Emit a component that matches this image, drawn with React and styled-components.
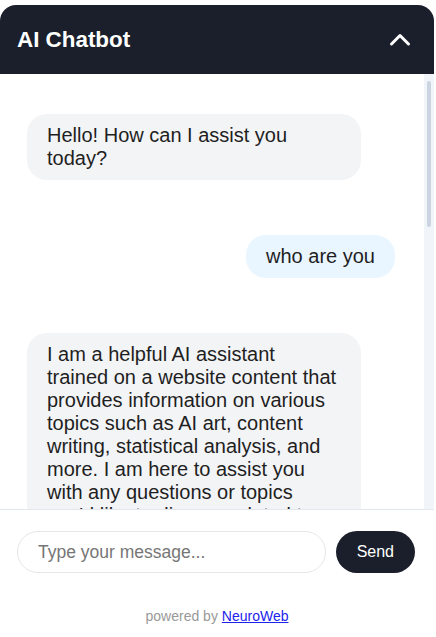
import React, { useState } from 'react'
import styled, { createGlobalStyle } from 'styled-components';

const GlobalStyle = createGlobalStyle`
  html, body {
    margin: 0;
    padding: 0;
    background: #ffffff;
    font-family: "Liberation Sans", Arial, sans-serif;
  }
  * { box-sizing: border-box; }
`;

const messages = [
  { id: 1, from: 'bot', text: 'Hello! How can I assist you today?' },
  { id: 2, from: 'user', text: 'who are you' },
  {
    id: 3,
    from: 'bot',
    text: "I am a helpful AI assistant trained on a website content that provides information on various topics such as AI art, content writing, statistical analysis, and more. I am here to assist you with any questions or topics you'd like to discuss related to these subjects. How can I help you today?",
  },
];

const App = () => {
  const [value, setValue] = useState('');

  return (
    <>
      <GlobalStyle />
      <Widget>
        <Header>
          <Title>AI Chatbot</Title>
          <ToggleButton aria-label="collapse">
            <svg width="24" height="24" viewBox="0 0 24 24" fill="none">
              <polyline points="3.5,16 12,7.5 20.5,16" stroke="#ffffff" strokeWidth="3" strokeLinecap="round" strokeLinejoin="round" />
            </svg>
          </ToggleButton>
        </Header>

        <MessagePane>
          <MessageList>
            {messages.map((m) => (
              <Bubble key={m.id} $user={m.from === 'user'}>{m.text}</Bubble>
            ))}
          </MessageList>
          <ScrollTrack>
            <ScrollThumb />
          </ScrollTrack>
        </MessagePane>

        <InputBar>
          <MessageInput
            placeholder="Type your message..."
            value={value}
            onChange={(e) => setValue(e.target.value)}
          />
          <SendButton>Send</SendButton>
        </InputBar>

        <Footer>
          powered by <a href="#">NeuroWeb</a>
        </Footer>
      </Widget>
    </>
  )
}

export default App;


const Widget = styled.div`
  margin-top: 5px;
  width: 434px;
  height: 632px;
  display: flex;
  flex-direction: column;
  background: #ffffff;
  border-radius: 16px 16px 0 0;
  overflow: hidden;
`;

const Header = styled.div`
  flex: 0 0 69px;
  display: flex;
  align-items: center;
  justify-content: space-between;
  padding: 0 22px 0 17px;
  background-color: #1b1f2b;
`;

const Title = styled.h1`
  margin: 0;
  font-size: 22.4px;
  font-weight: 700;
  color: #ffffff;
`;

const ToggleButton = styled.button`
  display: flex;
  padding: 0;
  border: none;
  background: none;
  cursor: pointer;
`;

const MessagePane = styled.div`
  flex: 1;
  min-height: 0;
  display: flex;
`;

const MessageList = styled.div`
  flex: 1;
  overflow: hidden;
  display: flex;
  flex-direction: column;
  align-items: flex-start;
  gap: 55px;
  padding: 40px 29px 40px 27px;
`;

const ScrollTrack = styled.div`
  flex: 0 0 10px;
  padding: 7px 3px;
  background-color: #f1f5f9;
`;

const ScrollThumb = styled.div`
  height: 146px;
  border-radius: 2px;
  background-color: #cbd5e1;
`;

const Bubble = styled.div`
  flex-shrink: 0;
  max-width: 334px;
  padding: 10px 20px;
  border-radius: 20px;
  font-size: 20px;
  color: #1f1f1f;
  background-color: ${(p) => (p.$user ? '#eaf6ff' : '#f3f4f6')};
  align-self: ${(p) => (p.$user ? 'flex-end' : 'flex-start')};
`;

const InputBar = styled.div`
  display: flex;
  align-items: center;
  gap: 10px;
  padding: 21px 19px 21px 17px;
  border-top: 1px solid #e2e8f0;
`;

const MessageInput = styled.input`
  flex: 1;
  min-width: 0;
  height: 42px;
  padding: 0 20px;
  border: 1px solid #e5e7eb;
  border-radius: 21px;
  font-family: "Liberation Sans", Arial, sans-serif;
  font-size: 17.5px;
  color: #222222;
  outline: none;
  &::placeholder {
    color: #767676;
  }
`;

const SendButton = styled.button`
  height: 42px;
  padding: 0 21px;
  border: none;
  border-radius: 21px;
  background-color: #1b1f2b;
  color: #ffffff;
  font-family: "Liberation Sans", Arial, sans-serif;
  font-size: 16px;
  font-weight: 500;
  cursor: pointer;
`;

const Footer = styled.div`
  padding: 14px 0 13px;
  text-align: center;
  font-size: 14px;
  line-height: 16px;
  color: #999999;
  a {
    color: #2222ee;
  }
`;
